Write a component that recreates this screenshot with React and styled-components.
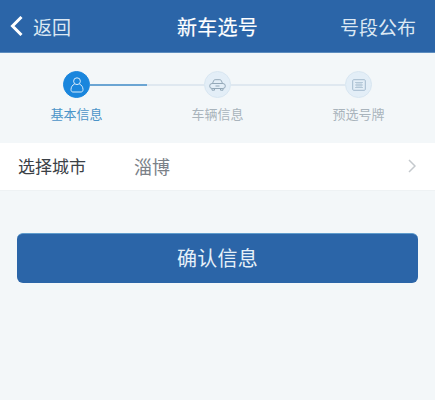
import React from "react";
import styled, { createGlobalStyle } from "styled-components";

const GlobalStyle = createGlobalStyle`
  html, body {
    margin: 0;
    padding: 0;
    background: #f3f7f9;
  }
  body {
    font-family: "Liberation Sans", "Noto Sans CJK SC", sans-serif;
  }
`;

const Page = styled.div`
  width: 435px;
  height: 400px;
  overflow: hidden;
  background: #f3f7f9;
`;

const Header = styled.header`
  display: grid;
  grid-template-columns: 1fr auto 1fr;
  align-items: center;
  height: 52px;
  padding: 0 19px;
  background: #2b65a8;
  border-bottom: 1px solid #5d8dbf;
  color: #fff;
`;

const BackLink = styled.div`
  display: flex;
  align-items: center;
  gap: 10px;
  margin-left: -9px;
  font-size: 19px;
  color: #dce8f3;
`;

const Title = styled.h1`
  margin: 0;
  font-size: 20px;
  font-weight: 400;
  letter-spacing: 0.3px;
  color: #fff;
  -webkit-text-stroke: 0.2px #fff;
`;

const HeaderAction = styled.div`
  justify-self: end;
  font-size: 19px;
  color: #dce8f3;
`;

const Stepper = styled.div`
  padding-top: 18px;
  height: 89px;
  box-sizing: border-box;
`;

const Track = styled.div`
  display: flex;
  align-items: center;
  padding: 0 63px;
`;

const StepCircle = styled.div`
  display: flex;
  align-items: center;
  justify-content: center;
  flex: none;
  box-sizing: border-box;
  width: 27px;
  height: 27px;
  border-radius: 50%;
  border: 1px solid ${(p) => (p.$active ? "#1a86dd" : "#d8e6f1")};
  background: ${(p) => (p.$active ? "#1a86dd" : "#e3eef7")};
  color: ${(p) => (p.$active ? "#d8ecfb" : "#93a8b8")};
`;

const Line = styled.div`
  flex: 1;
  height: 2px;
  background: ${(p) =>
    p.$half
      ? "linear-gradient(to right, #6ba5d3 50%, #dfe8f0 50%)"
      : "#dfe8f0"};
`;

const Labels = styled.div`
  display: grid;
  grid-template-columns: repeat(3, 141px);
  padding: 7px 0 0 6px;
`;

const StepLabel = styled.div`
  text-align: center;
  font-size: 13px;
  line-height: 20px;
  color: ${(p) => (p.$active ? "#4b94c8" : "#a9b4bc")};
`;

const CityRow = styled.div`
  display: flex;
  align-items: center;
  box-sizing: border-box;
  height: 48px;
  margin-top: 1px;
  padding: 0 19px 2px 18px;
  background: #fff;
  border-bottom: 1px solid #eef2f4;
`;

const RowLabel = styled.span`
  width: 116px;
  font-size: 17px;
  color: #3a4046;
`;

const RowValue = styled.span`
  flex: 1;
  font-size: 18px;
  color: #7b8188;
`;

const ConfirmButton = styled.button`
  display: block;
  width: 401px;
  height: 50px;
  margin: 42px 0 0 17px;
  padding: 0 0 3px;
  border: none;
  border-top: 1px solid #5f9ccc;
  border-radius: 6px;
  background: #2b65a8;
  color: #e6f0f8;
  font-family: inherit;
  font-size: 20px;
  letter-spacing: 0.2px;
`;

const steps = ["基本信息", "车辆信息", "预选号牌"];

const App = () => {
  return (
    <Page>
      <GlobalStyle />
      <Header>
        <BackLink>
          <svg width="13" height="20" viewBox="0 0 13 20" fill="none">
            <path d="M11.5 1 L2.5 10 L11.5 19" stroke="#fff" strokeWidth="3" />
          </svg>
          返回
        </BackLink>
        <Title>新车选号</Title>
        <HeaderAction>号段公布</HeaderAction>
      </Header>
      <Stepper>
        <Track>
          <StepCircle $active>
            <svg width="14" height="16" viewBox="0 0 14 16" fill="none" stroke="currentColor" strokeWidth="1">
              <circle cx="7" cy="4.2" r="3.4" />
              <path d="M4.6 7 C2.4 8 1 10 1 12.6 C1 14.2 1.8 15 3 15 H11 C12.2 15 13 14.2 13 12.6 C13 10 11.6 8 9.4 7" />
            </svg>
          </StepCircle>
          <Line $half />
          <StepCircle>
            <svg width="17" height="12" viewBox="0 0 17 12" fill="none" stroke="currentColor" strokeWidth="1">
              <path d="M3.5 4.5 L4.6 1.8 C4.9 1 5.4 0.7 6.1 0.7 H10.9 C11.6 0.7 12.1 1 12.4 1.8 L13.5 4.5" />
              <rect x="0.7" y="4.5" width="15.6" height="5" rx="2.4" />
              <path d="M3 9.5 V11.2 H5.5 V9.5 M11.5 9.5 V11.2 H14 V9.5 M6.5 7 H10.5" />
            </svg>
          </StepCircle>
          <Line />
          <StepCircle>
            <svg width="14" height="12" viewBox="0 0 14 12" fill="none" stroke="#a3bacd" strokeWidth="1">
              <rect x="0.7" y="0.7" width="12.6" height="10.6" rx="1" />
              <path d="M3 3.5 H11 M3 6 H11 M3 8.5 H11 M5 3.5 V8.5 M7 3.5 V8.5 M9 3.5 V8.5" strokeWidth="0.7" />
            </svg>
          </StepCircle>
        </Track>
        <Labels>
          {steps.map((step, i) => (
            <StepLabel key={step} $active={i === 0}>
              {step}
            </StepLabel>
          ))}
        </Labels>
      </Stepper>
      <CityRow>
        <RowLabel>选择城市</RowLabel>
        <RowValue>淄博</RowValue>
        <svg width="8" height="14" viewBox="0 0 8 14" fill="none">
          <path d="M1 1 L7 7 L1 13" stroke="#c4c9cd" strokeWidth="1.5" />
        </svg>
      </CityRow>
      <ConfirmButton>确认信息</ConfirmButton>
    </Page>
  );
};

export default App;
